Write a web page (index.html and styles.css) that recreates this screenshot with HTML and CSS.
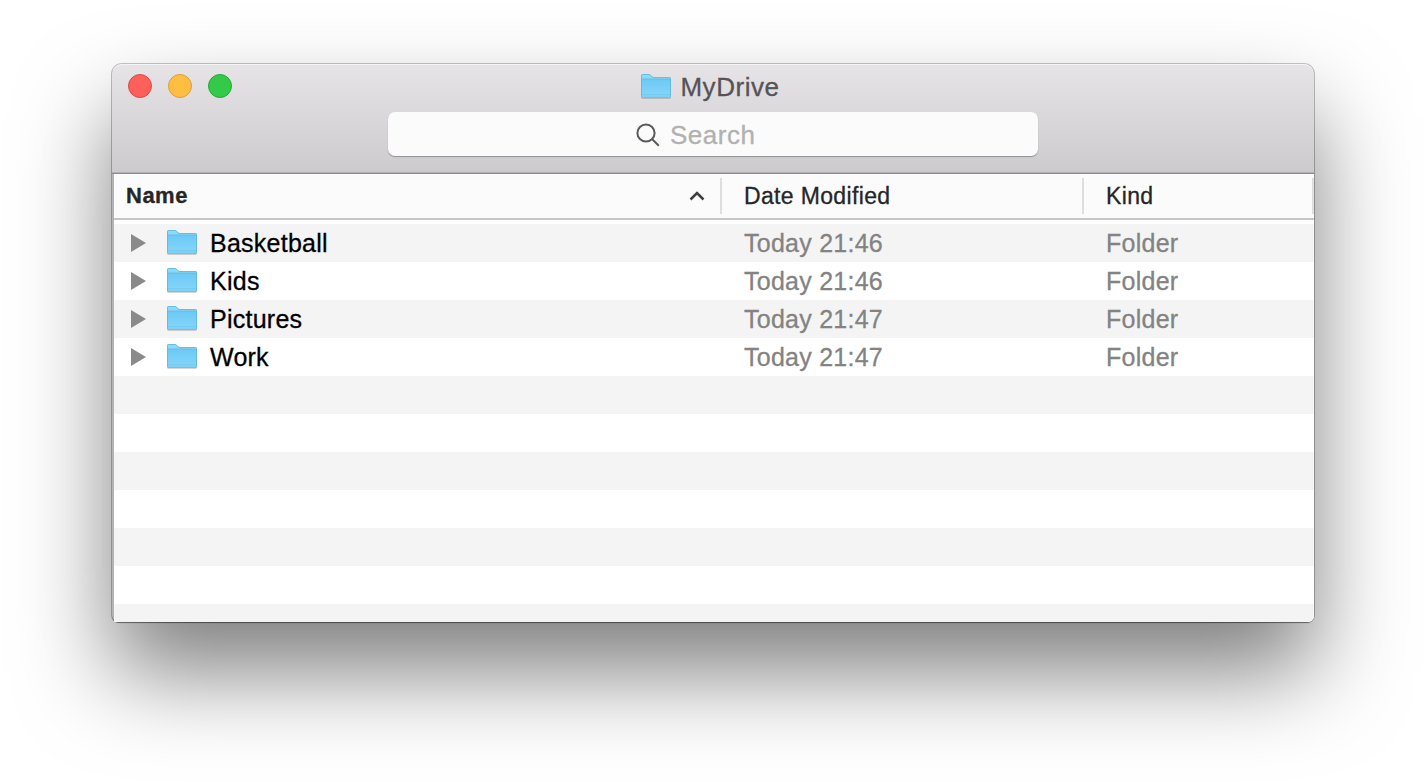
FILE: index.html
```html
<!DOCTYPE html>
<html lang="en">
<head>
<meta charset="utf-8">
<title>MyDrive</title>
<link rel="stylesheet" href="styles.css">
</head>
<body>
<svg width="0" height="0" class="defs" aria-hidden="true">
  <defs>
    <linearGradient id="front" x1="0" y1="0" x2="0" y2="1">
      <stop offset="0" stop-color="#6bc9f6"/>
      <stop offset="1" stop-color="#87d6f9"/>
    </linearGradient>
    <symbol id="folder" viewBox="0 0 32 28">
      <path d="M1.500 25.400h29" stroke="#000" stroke-opacity=".16" stroke-width="1.200"/>
      <path d="M1 2.500Q1 1 2.500 1H9q1 0 1.800.9L12 3.200q.8.800 2 .8h15.500Q31 4 31 5.500V23.800q0 1-1 1H2q-1 0-1-1z" fill="#8cdaf9"/>
      <path d="M1 6h30v17.800q0 1-1 1H2q-1 0-1-1z" fill="url(#front)"/>
      <path d="M1.500 6h29" stroke="#62b9de" stroke-width=".8"/>
      <path d="M2 21.700h28" stroke="#6dc6ec" stroke-width=".7"/>
      <path d="M1.500 2.500q0-1 1-1H9q.8 0 1.500.8l1.200 1.300q.9.900 2.100.900h15.700q1 0 1 1V23.600q0 .7-.8.700H2.300q-.8 0-.8-.7z" fill="none" stroke="#5fb5da" stroke-width=".8"/>
    </symbol>
  </defs>
</svg>
<main class="window">
  <header class="toolbar">
    <div class="titlebar">
      <div class="lights"><i class="light close"></i><i class="light minimize"></i><i class="light zoom"></i></div>
      <h1 class="title"><svg class="folder"><use href="#folder"/></svg><span>MyDrive</span></h1>
    </div>
    <div class="search">
      <svg class="glass" viewBox="0 0 24 24"><circle cx="10" cy="10" r="8.600"/><path d="M16 16 22.800 22.800"/></svg>
      <span>Search</span>
    </div>
  </header>
  <section class="list">
    <div class="columns">
      <div class="column name">Name<svg class="sort" viewBox="0 0 16 10"><path d="M1.500 8.500 8 2l6.500 6.500"/></svg></div>
      <div class="column date">Date Modified</div>
      <div class="column kind">Kind</div>
    </div>
    <div class="rows">
      <div class="row"><svg class="arrow" viewBox="0 0 16 18"><path d="M1 0 16 9 1 18z"/></svg><svg class="folder"><use href="#folder"/></svg><span class="file">Basketball</span><span class="when">Today 21:46</span><span>Folder</span></div>
      <div class="row"><svg class="arrow" viewBox="0 0 16 18"><path d="M1 0 16 9 1 18z"/></svg><svg class="folder"><use href="#folder"/></svg><span class="file">Kids</span><span class="when">Today 21:46</span><span>Folder</span></div>
      <div class="row"><svg class="arrow" viewBox="0 0 16 18"><path d="M1 0 16 9 1 18z"/></svg><svg class="folder"><use href="#folder"/></svg><span class="file">Pictures</span><span class="when">Today 21:47</span><span>Folder</span></div>
      <div class="row"><svg class="arrow" viewBox="0 0 16 18"><path d="M1 0 16 9 1 18z"/></svg><svg class="folder"><use href="#folder"/></svg><span class="file">Work</span><span class="when">Today 21:47</span><span>Folder</span></div>
    </div>
  </section>
</main>
</body>
</html>
```
FILE: styles.css
```css
* { box-sizing: border-box; }
body {
  margin: 0;
  height: 782px;
  overflow: hidden;
  padding: 64px 112px 0;
  background: #fff;
  font-family: "Liberation Sans", Arial, sans-serif;
  -webkit-text-stroke: .3px currentColor;
}
.defs { display: block; height: 0; }
.window {
  width: 1202px;
  height: 558px;
  border-radius: 10px 10px 7px 7px;
  background: #b4b4b4;
  box-shadow: 0 0 0 1px rgba(0,0,0,.22), 0 1px 1px rgba(0,0,0,.35), 0 50px 92px rgba(0,0,0,.5);
}
.toolbar {
  height: 110px;
  border-radius: 10px 10px 0 0;
  background: linear-gradient(#e6e4e7, #cccacd);
  box-shadow: inset 0 1px 0 #f5f4f5, inset 0 -1px 0 #8f8d8f, inset 0 -2px 0 #b0aeb0;
}
.titlebar {
  display: grid;
  grid-template-columns: 1fr auto 1fr;
  align-items: center;
  height: 48px;
  padding: 0 16px;
}
.lights { display: flex; gap: 16px; margin-top: -4px; }
.light { width: 24px; height: 24px; border-radius: 50%; border: 1px solid; }
.close { background: #fd605b; border-color: #df4845; }
.minimize { background: #febe41; border-color: #dc9e39; }
.zoom { background: #33c949; border-color: #24a937; }
.title {
  display: flex;
  align-items: center;
  gap: 8px;
  margin: -2px 0 0 -6px;
  color: #565358;
  font-size: 26px;
  font-weight: 400;
  line-height: 30px;
  letter-spacing: .55px;
}
.folder { width: 32px; height: 28px; flex: none; }
.search {
  display: flex;
  align-items: center;
  gap: 10px;
  width: 650px;
  height: 44px;
  margin: 0 auto;
  padding: 2px 0 0 248px;
  border-radius: 7px;
  background: #fbfbfb;
  box-shadow: 0 1px 1px rgba(0,0,0,.3);
  color: #b1b1b1;
  font-size: 26px;
  letter-spacing: .5px;
}
.glass { width: 24px; height: 24px; fill: none; stroke: #5a5a5a; stroke-width: 2; }
.list {
  height: 448px;
  margin-left: 2px;
  overflow: hidden;
  border-radius: 0 0 6px 0;
  background: #fff;
}
.columns {
  display: flex;
  align-items: center;
  height: 46px;
  border-bottom: 2px solid #c6c6c6;
  background: #fbfbfb;
  color: #262626;
  font-size: 23px;
  letter-spacing: .35px;
}
.column { display: flex; align-items: center; height: 36px; border-right: 2px solid #dedede; }
.name { width: 608px; padding: 0 15px 0 12px; justify-content: space-between; font-size: 22px; font-weight: 700; letter-spacing: .5px; }
.date { width: 362px; padding-left: 22px; }
.kind { flex: 1; padding-left: 22px; }
.sort { width: 16px; height: 10px; fill: none; stroke: #404040; stroke-width: 2.5; }
.rows {
  height: 402px;
  margin-top: 4px;
  background: repeating-linear-gradient(#f4f4f4 0 38px, #fff 38px 76px);
}
.row {
  display: grid;
  grid-template-columns: 36px 44px 534px 362px 1fr;
  align-items: center;
  height: 38px;
  padding-left: 16px;
  color: #838383;
  font-size: 25px;
  letter-spacing: .25px;
}
.arrow { width: 16px; height: 18px; fill: #8a8a8a; }
.file { color: #000; }
```
